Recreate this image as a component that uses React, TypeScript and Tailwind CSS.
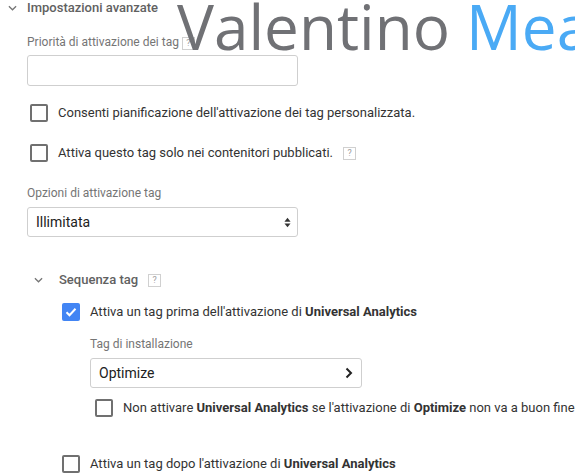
import React from 'react';

const ChevronDown: React.FC<{ className?: string }> = ({ className }) => (
  <svg viewBox="0 0 10 6" className={className} fill="none" stroke="#757575" strokeWidth="1.4">
    <path d="M1 1l4 4 4-4" />
  </svg>
);

const Help: React.FC = () => (
  <span className="inline-flex items-center justify-center w-[13px] h-[13px] border border-[#d0d0d0] text-[9px] leading-none text-[#9e9e9e] ml-[10px]">
    ?
  </span>
);

const Checkbox: React.FC<{ checked?: boolean }> = ({ checked }) =>
  checked ? (
    <span className="flex items-center justify-center w-[18px] h-[18px] rounded-[2px] bg-[#4285f4] shrink-0">
      <svg viewBox="0 0 14 14" className="w-[14px] h-[14px]" fill="none" stroke="white" strokeWidth="2">
        <path d="M2.5 7.2l3 3 6-6.4" />
      </svg>
    </span>
  ) : (
    <span className="block w-[18px] h-[18px] rounded-[2px] border-2 border-[#707070] shrink-0" />
  );

const App: React.FC = () => {
  return (
    <div className="relative w-[575px] h-[476px] overflow-hidden bg-white font-['Roboto',sans-serif] text-[13px] text-[#333]">
      {/* header */}
      <div className="flex items-center h-[16px]">
        <span className="w-[27px] flex justify-center pr-[3px]">
          <ChevronDown className="w-[9px] h-[6px]" />
        </span>
        <span className="font-medium text-[#616161]">Impostazioni avanzate</span>
      </div>

      <div className="pl-[27px]">
        <div className="mt-[18px] h-[16px] flex items-center text-[12px] text-[#757575]">
          Priorità di attivazione dei tag
          <span className="ml-[3px]">
            <span className="inline-flex items-center justify-center w-[13px] h-[13px] border border-[#d0d0d0] text-[9px] leading-none text-[#9e9e9e]">?</span>
          </span>
        </div>
        <div className="mt-[5px] w-[271px] h-[31px] border border-[#cfcfcf] rounded-[3px]" />

        <div className="mt-[18px] h-[18px] flex items-center pl-[3px]">
          <Checkbox />
          <span className="ml-[10px]">Consenti pianificazione dell'attivazione dei tag personalizzata.</span>
        </div>

        <div className="mt-[22px] h-[18px] flex items-center pl-[3px]">
          <Checkbox />
          <span className="ml-[10px]">Attiva questo tag solo nei contenitori pubblicati.</span>
          <Help />
        </div>

        <div className="mt-[23px] h-[16px] flex items-center text-[12px] text-[#757575]">Opzioni di attivazione tag</div>
        <div className="mt-[6px] w-[271px] h-[30px] border border-[#cfcfcf] rounded-[3px] flex items-center justify-between pl-[8px] pr-[6px]">
          <span className="text-[14px] text-[#212121]">Illimitata</span>
          <svg viewBox="0 0 8 12" className="w-[7px] h-[11px]" fill="#333">
            <path d="M4 0.5L7.5 5H0.5z" />
            <path d="M4 11.5L7.5 7H0.5z" />
          </svg>
        </div>

        {/* sequence */}
        <div className="mt-[35px] h-[16px] flex items-center">
          <span className="w-[32px] flex justify-center pr-[10px]">
            <ChevronDown className="w-[9px] h-[6px]" />
          </span>
          <span className="font-medium text-[#616161]">Sequenza tag</span>
          <Help />
        </div>

        <div className="pl-[35px]">
          <div className="mt-[15px] h-[18px] flex items-center">
            <Checkbox checked />
            <span className="ml-[10px]">
              Attiva un tag prima dell'attivazione di <b className="font-bold">Universal Analytics</b>
            </span>
          </div>

          <div className="pl-[28px]">
            <div className="mt-[15px] h-[16px] flex items-center text-[12px] text-[#757575]">Tag di installazione</div>
            <div className="mt-[6px] w-[272px] h-[30px] border border-[#cfcfcf] rounded-[3px] flex items-center justify-between pl-[8px] pr-[8px]">
              <span className="text-[14px] text-[#212121]">Optimize</span>
              <svg viewBox="0 0 8 12" className="w-[8px] h-[12px]" fill="none" stroke="#222" strokeWidth="2">
                <path d="M1.5 1.5l4.5 4.5-4.5 4.5" />
              </svg>
            </div>
            <div className="mt-[11px] h-[18px] flex items-center pl-[5px]">
              <Checkbox />
              <span className="ml-[10px] whitespace-nowrap">
                Non attivare <b className="font-bold">Universal Analytics</b> se l'attivazione di{' '}
                <b className="font-bold">Optimize</b> non va a buon fine
              </span>
            </div>
          </div>

          <div className="mt-[38px] h-[18px] flex items-center">
            <Checkbox />
            <span className="ml-[10px]">
              Attiva un tag dopo l'attivazione di <b className="font-bold">Universal Analytics</b>
            </span>
          </div>
        </div>
      </div>

      {/* watermark */}
      <div className="absolute left-[177px] top-[-5px] whitespace-nowrap font-['Open_Sans',sans-serif] text-[62px] leading-none pointer-events-none">
        <span className="text-[#707175]">Valentino </span>
        <span className="text-[#4aaaf5]">Mea</span>
      </div>
    </div>
  );
};

export default App;
